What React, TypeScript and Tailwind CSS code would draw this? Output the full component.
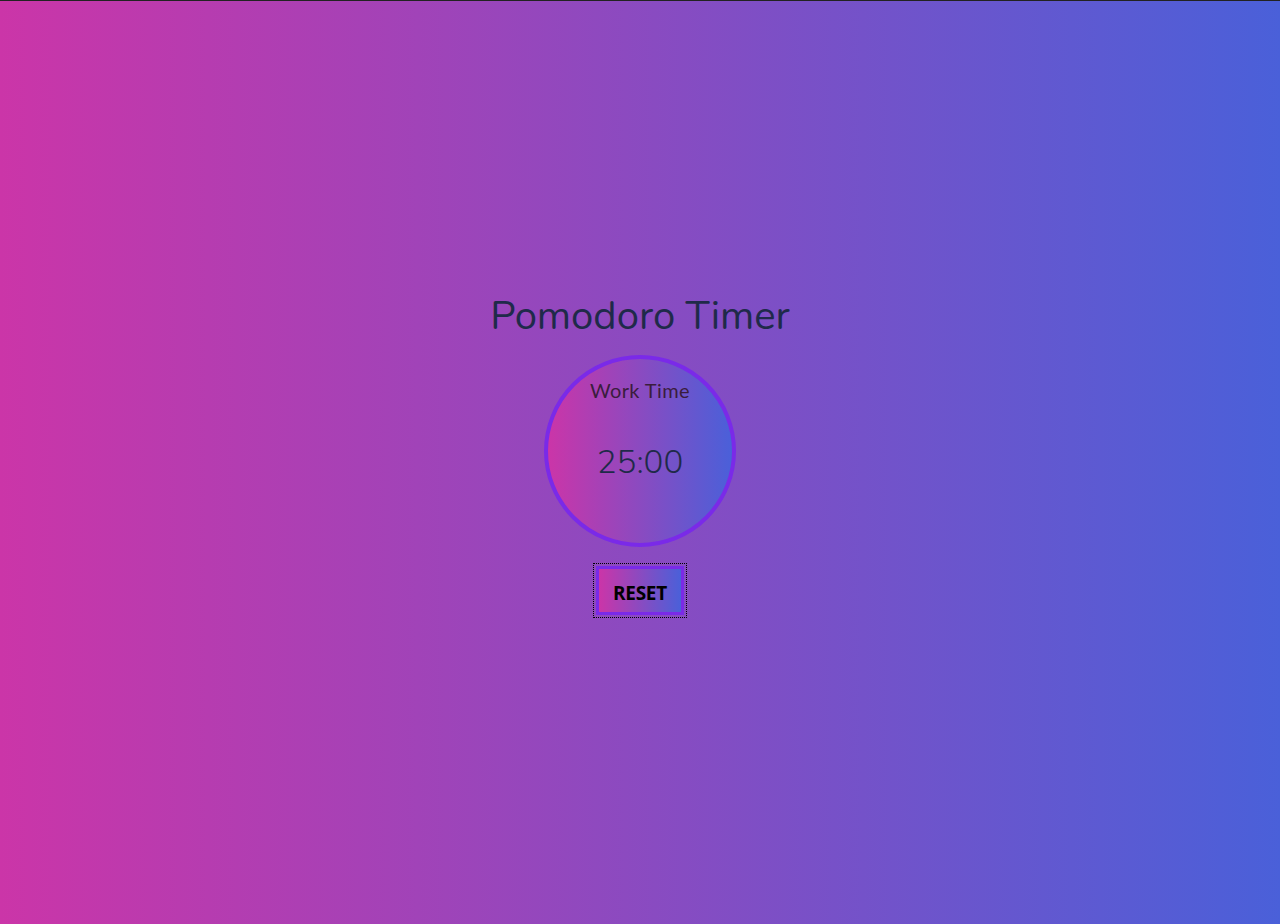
export default function App() {
  return (
    <div className="w-full h-[924px] border-t border-[#222] bg-[linear-gradient(to_right,#cb35a8,#4a60d9)] flex flex-col items-center">
      <h1 className="mt-[291px] text-[40px] leading-[48px] text-[#1f2a4a] font-['Nunito','Lato',sans-serif] font-normal">
        Pomodoro Timer
      </h1>
      <div className="mt-[15px] w-[192px] h-[192px] rounded-full border-4 border-[#7a2ae8] bg-[linear-gradient(to_right,#cb35a8,#4a60d9)] flex flex-col items-center">
        <div className="mt-[19px] text-[20px] leading-[24px] tracking-[0.4px] text-[#3a1d3d] font-['Lato',sans-serif]">Work Time</div>
        <div className="mt-[41px] text-[33px] leading-[40px] text-[#1f2a4a] font-['Nunito','Lato',sans-serif] font-light">25:00</div>
      </div>
      <button className="mt-[19px] w-[88px] h-[49px] pt-[4px] border-[3px] border-[#7a2ae8] bg-[linear-gradient(to_right,#cb35a8,#4a60d9)] text-[19px] leading-[26px] font-bold text-black font-['Open_Sans',sans-serif] outline-1 outline-dotted outline-black outline-offset-2 tracking-[-0.3px]">
        RESET
      </button>
    </div>
  );
}
